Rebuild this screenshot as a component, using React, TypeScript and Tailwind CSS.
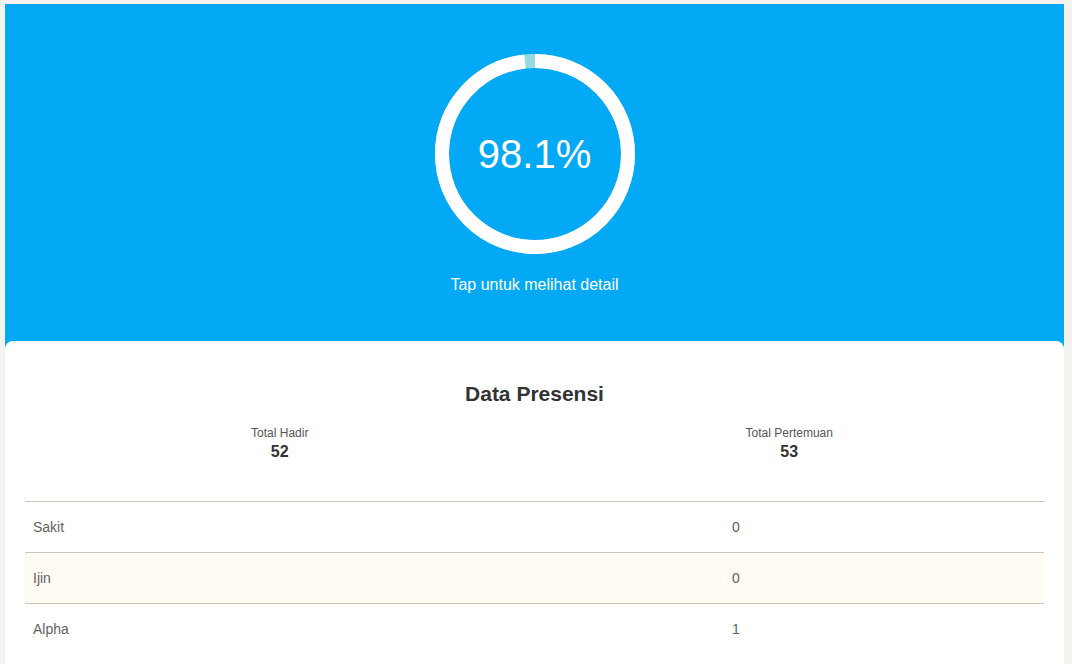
const rows = [
  { label: 'Sakit', value: 0 },
  { label: 'Ijin', value: 0 },
  { label: 'Alpha', value: 1 },
]

function Ring({ percent }: { percent: number }) {
  const r = 93
  const c = 2 * Math.PI * r
  return (
    <svg width="200" height="200" viewBox="0 0 200 200" className="absolute inset-0">
      <circle cx="100" cy="100" r={r} fill="none" stroke="#96dbe4" strokeWidth="14" />
      <circle
        cx="100"
        cy="100"
        r={r}
        fill="none"
        stroke="#ffffff"
        strokeWidth="14"
        strokeDasharray={`${(c * percent) / 100} ${c}`}
        transform="rotate(-90 100 100)"
      />
    </svg>
  )
}

export default function App() {
  return (
    <div className="min-h-[664px] bg-[#f3f2ee] pt-[4px] pl-[5px] pr-[8px] font-['Liberation_Sans',Arial,sans-serif]">
      <div className="bg-[#03a9f4]">
        <div className="flex h-[337px] flex-col items-center pt-[50px]">
          <div className="relative flex h-[200px] w-[200px] items-center justify-center">
            <Ring percent={98.1} />
            <span className="relative text-[40px] leading-none text-white">98.1%</span>
          </div>
          <p className="mt-[22px] text-[16px] leading-[18px] text-white">Tap untuk melihat detail</p>
        </div>
        <div className="rounded-t-[8px] bg-white px-[20px] pb-[10px]">
          <h2 className="pt-[41px] text-center text-[21px] font-bold leading-[24px] text-[#333]">Data Presensi</h2>
          <div className="mt-[20px] grid grid-cols-2">
            <div className="flex flex-col items-center">
              <span className="text-[12px] leading-[14px] text-[#555]">Total Hadir</span>
              <span className="mt-[3px] text-[16px] font-bold leading-[18px] text-[#333]">52</span>
            </div>
            <div className="flex flex-col items-center">
              <span className="text-[12px] leading-[14px] text-[#555]">Total Pertemuan</span>
              <span className="mt-[3px] text-[16px] font-bold leading-[18px] text-[#333]">53</span>
            </div>
          </div>
          <table className="mt-[40px] w-full border-collapse text-[14px] text-[#5f5f5f]">
            <tbody>
              {rows.map((row, i) => (
                <tr key={row.label} className={`border-t border-[#ccc5b9] ${i === 1 ? 'bg-[#fffbf3]' : ''}`}>
                  <td className="h-[51px] w-[699px] px-[8px] align-middle">{row.label}</td>
                  <td className="h-[51px] px-[8px] align-middle">{row.value}</td>
                </tr>
              ))}
            </tbody>
          </table>
        </div>
      </div>
    </div>
  )
}
